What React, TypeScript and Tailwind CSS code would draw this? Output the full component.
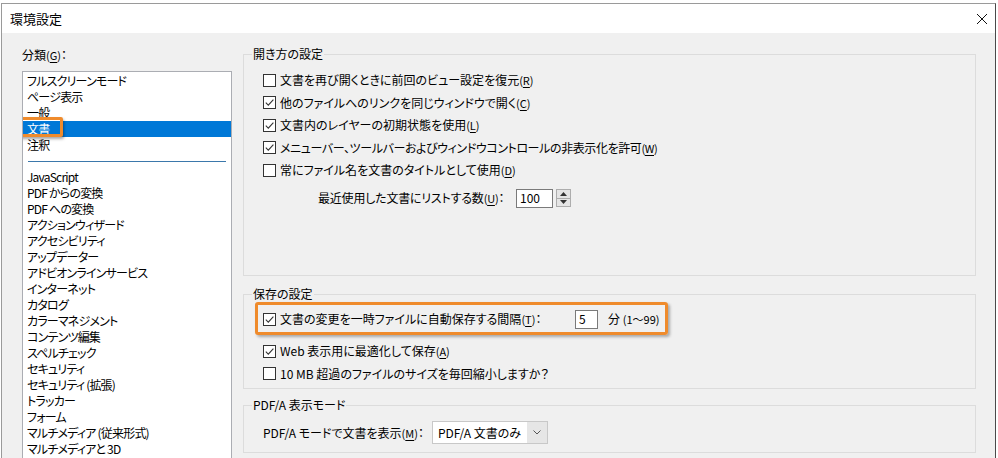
import React from 'react';

const LIST_TOP = ['フルスクリーンモード', 'ページ表示', '一般', '文書', '注釈'];

const LIST_REST = [
  'JavaScript',
  'PDF からの変換',
  'PDF への変換',
  'アクションウィザード',
  'アクセシビリティ',
  'アップデーター',
  'アドビオンラインサービス',
  'インターネット',
  'カタログ',
  'カラーマネジメント',
  'コンテンツ編集',
  'スペルチェック',
  'セキュリティ',
  'セキュリティ (拡張)',
  'トラッカー',
  'フォーム',
  'マルチメディア (従来形式)',
  'マルチメディアと 3D',
];

// access key like (R) with the letter underlined
function Key({ k }: { k: string }) {
  return (
    <span className="text-[11px]">
      (<span className="underline underline-offset-[2px]">{k}</span>)
    </span>
  );
}

function CheckBox({ checked }: { checked?: boolean }) {
  return (
    <span className="flex items-center justify-center w-[13px] h-[13px] shrink-0 border border-[#333] bg-white">
      {checked && (
        <svg viewBox="0 0 11 11" className="w-[11px] h-[11px]">
          <path d="M1.8 5.6 L4.3 8.1 L9.4 2.6" fill="none" stroke="#333" strokeWidth="1.1" />
        </svg>
      )}
    </span>
  );
}

function CheckRow({ checked, children }: { checked?: boolean; children: React.ReactNode }) {
  return (
    <div className="flex items-center gap-[4px] h-[22.5px]">
      <CheckBox checked={checked} />
      <span className="whitespace-nowrap">{children}</span>
    </div>
  );
}

function Spinner() {
  return (
    <div className="flex flex-col w-[15px] h-[18px] ml-[3px]">
      <span className="flex-1 flex items-center justify-center bg-[#e5e5e5] border border-[#adadad]">
        <svg viewBox="0 0 7 4" className="w-[7px] h-[4px]">
          <path d="M0 4 L3.5 0 L7 4 Z" fill="#333" />
        </svg>
      </span>
      <span className="flex-1 flex items-center justify-center bg-[#e5e5e5] border border-t-0 border-[#adadad]">
        <svg viewBox="0 0 7 4" className="w-[7px] h-[4px]">
          <path d="M0 0 L3.5 4 L7 0 Z" fill="#333" />
        </svg>
      </span>
    </div>
  );
}

export default function App() {
  return (
    <div className="w-[998px] h-[458px] overflow-hidden bg-white text-[12px] leading-[16px] text-black font-['Noto_Sans_CJK_JP',sans-serif] [font-feature-settings:'palt']">
      <div className="h-[3px] bg-white" />

      <div className="ml-[1px] w-[995px] h-[460px] flex flex-col border border-[#9a9a9a] border-r-[#4a4a4a]">
        {/* title bar */}
        <div className="h-[29px] shrink-0 flex items-center justify-between bg-white pl-[8px] pr-[8px]">
          <span className="text-[13px] leading-[16px]">環境設定</span>
          <svg viewBox="0 0 10 10" className="w-[10px] h-[10px]">
            <path d="M0 0 L10 10 M10 0 L0 10" stroke="#111" strokeWidth="1" />
          </svg>
        </div>

        <div className="flex-1 flex gap-[11px] bg-[#f0f0f0] pl-[20px] pt-[13px]">
          {/* category list */}
          <div className="w-[210px] shrink-0 pt-[1px]">
            <div className="whitespace-nowrap">
              分類<Key k="G" />：
            </div>
            <div className="mt-[8px] h-[420px] overflow-hidden border border-[#abadb3] bg-white pt-[1px] tracking-[-0.8px]">
              {LIST_TOP.map((item) => {
                const active = item === '文書';
                return (
                  <div
                    key={item}
                    className={
                      active
                        ? 'relative h-[16px] pl-[4px] whitespace-nowrap bg-[#0078d7] text-white'
                        : 'h-[16px] pl-[4px] whitespace-nowrap'
                    }
                  >
                    {item}
                    {active && (
                      <span className="absolute left-[-6px] top-[-4px] w-[46px] h-[20px] border-[3px] border-[#ef8b2c] rounded-[2px] shadow-[1px_2px_3px_rgba(0,0,0,0.35)]" />
                    )}
                  </div>
                );
              })}
              <div className="h-[16px] flex items-center px-[5px]">
                <div className="h-px w-full bg-[#3b78ab]" />
              </div>
              {LIST_REST.map((item) => (
                <div key={item} className="h-[16px] pl-[4px] whitespace-nowrap">
                  {item}
                </div>
              ))}
            </div>
          </div>

          {/* settings */}
          <div className="w-[733px] shrink-0 flex flex-col">
            <fieldset className="h-[230px] min-w-0 border border-[#dcdcdc] px-[8px]">
              <legend className="px-[1px] leading-[16px]">開き方の設定</legend>
              <div className="pl-[11px] mt-[7px]">
                <CheckRow>
                  文書を再び開くときに前回のビュー設定を復元<Key k="R" />
                </CheckRow>
                <CheckRow checked>
                  他のファイルへのリンクを同じウィンドウで開く<Key k="C" />
                </CheckRow>
                <CheckRow checked>
                  文書内のレイヤーの初期状態を使用<Key k="L" />
                </CheckRow>
                <CheckRow checked>
                  <span className="tracking-[-0.4px]">
                    メニューバー、ツールバーおよびウィンドウコントロールの非表示化を許可<Key k="W" />
                  </span>
                </CheckRow>
                <CheckRow>
                  常にファイル名を文書のタイトルとして使用<Key k="D" />
                </CheckRow>
                <div className="flex items-center mt-[7px] pl-[55px]">
                  <span className="w-[198px] whitespace-nowrap tracking-[-0.2px]">
                    最近使用した文書にリストする数<Key k="U" />：
                  </span>
                  <span className="w-[37px] h-[19px] flex items-center pl-[3px] bg-white border border-[#7a7a7a]">
                    100
                  </span>
                  <Spinner />
                </div>
              </div>
            </fieldset>

            <fieldset className="mt-[10px] h-[103px] min-w-0 border border-[#dcdcdc] px-[8px]">
              <legend className="px-[1px] leading-[16px]">保存の設定</legend>
              <div className="pl-[11px]">
                <div className="-ml-[8px] w-[413px] h-[33px] pl-[5px] pt-[4px] border-[3px] border-[#ef8b2c] rounded-[3px] shadow-[2px_2px_3px_rgba(0,0,0,0.3)]">
                  <div className="flex items-center h-[20px]">
                    <CheckBox checked />
                    <span className="ml-[4px] w-[295px] whitespace-nowrap">
                      文書の変更を一時ファイルに自動保存する間隔<Key k="T" />：
                    </span>
                    <span className="w-[23px] h-[19px] flex items-center pl-[3px] bg-white border border-[#7a7a7a]">
                      5
                    </span>
                    <span className="ml-[10px] whitespace-nowrap">
                      分 <span className="text-[11px]">(1〜99)</span>
                    </span>
                  </div>
                </div>
                <div className="mt-[5px]">
                  <CheckRow checked>
                    Web 表示用に最適化して保存<Key k="A" />
                  </CheckRow>
                  <CheckRow>10 MB 超過のファイルのサイズを毎回縮小しますか？</CheckRow>
                </div>
              </div>
            </fieldset>

            <fieldset className="mt-[8px] h-[56px] min-w-0 border border-[#dcdcdc] px-[8px]">
              <legend className="px-[1px] leading-[16px]">PDF/A 表示モード</legend>
              <div className="pl-[11px] mt-[8px] flex items-center">
                <span className="w-[169px] whitespace-nowrap">
                  PDF/A モードで文書を表示<Key k="M" />：
                </span>
                <div className="w-[116px] h-[23px] flex border border-[#c8c8c8] bg-white">
                  <span className="flex-1 flex items-center pl-[5px] whitespace-nowrap">PDF/A 文書のみ</span>
                  <span className="w-[20px] flex items-center justify-center bg-[#e6e6e6]">
                    <svg viewBox="0 0 8 5" className="w-[8px] h-[5px]">
                      <path d="M0.5 0.5 L4 4 L7.5 0.5" fill="none" stroke="#555" strokeWidth="1" />
                    </svg>
                  </span>
                </div>
              </div>
            </fieldset>
          </div>
        </div>
      </div>
    </div>
  );
}
